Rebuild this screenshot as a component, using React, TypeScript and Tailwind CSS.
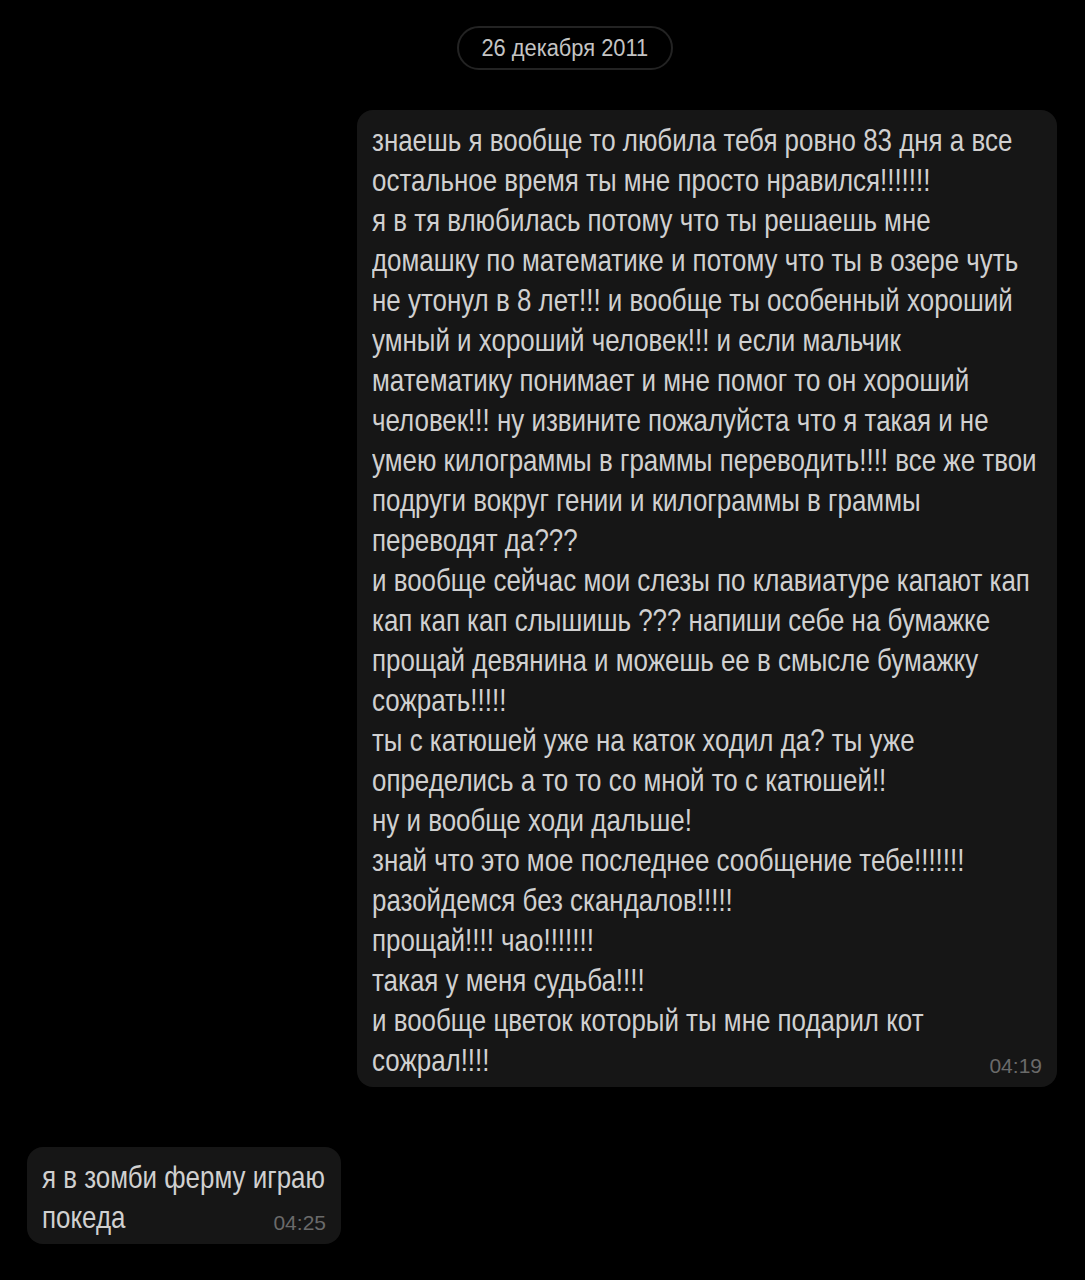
import React from 'react';

const longMessage = [
  'знаешь я вообще то любила тебя ровно 83 дня а все',
  'остальное время ты мне просто нравился!!!!!!!',
  'я в тя влюбилась потому что ты решаешь мне',
  'домашку по математике и потому что ты в озере чуть',
  'не утонул в 8 лет!!! и вообще ты особенный хороший',
  'умный и хороший человек!!! и если мальчик',
  'математику понимает и мне помог то он хороший',
  'человек!!! ну извините пожалуйста что я такая и не',
  'умею килограммы в граммы переводить!!!! все же твои',
  'подруги вокруг гении и килограммы в граммы',
  'переводят да???',
  'и вообще сейчас мои слезы по клавиатуре капают кап',
  'кап кап кап слышишь ??? напиши себе на бумажке',
  'прощай девянина и можешь ее в смысле бумажку',
  'сожрать!!!!!',
  'ты с катюшей уже на каток ходил да? ты уже',
  'определись а то то со мной то с катюшей!!',
  'ну и вообще ходи дальше!',
  'знай что это мое последнее сообщение тебе!!!!!!!',
  'разойдемся без скандалов!!!!!',
  'прощай!!!! чао!!!!!!!',
  'такая у меня судьба!!!!',
  'и вообще цветок который ты мне подарил кот',
  'сожрал!!!!',
];

const shortMessage = ['я в зомби ферму играю', 'покеда'];

// the screenshot's font is a narrow face, so the Arial-width text gets squeezed horizontally
function Bubble({ lines, time, className }: { lines: string[]; time: string; className: string }) {
  return (
    <div className={`relative rounded-[16px] bg-[#161616] pt-[10px] pb-[7px] pl-[15px] pr-[15px] ${className}`}>
      {lines.map((line, i) => (
        <div key={i} className="origin-left scale-x-[0.81] whitespace-nowrap leading-[40px]">
          {line}
        </div>
      ))}
      <span className="absolute right-[15px] bottom-[11px] text-[21px] leading-none text-[#6a6a6a]">{time}</span>
    </div>
  );
}

export default function App() {
  return (
    <div
      className="min-h-[1280px] w-[1085px] bg-black text-[#d0d0d0] text-[32px]"
      style={{ fontFamily: '"Liberation Sans", Arial, sans-serif' }}
    >
      <div className="pt-[26px] pl-[457px]">
        <div className="flex h-[44px] w-[216px] items-center justify-center rounded-full border-2 border-[#232323] text-[23px] text-[#c4c4c4]">
          <span className="scale-x-[0.95]">26 декабря 2011</span>
        </div>
      </div>

      <div className="mt-[40px] flex justify-end pr-[28px]">
        <Bubble lines={longMessage} time="04:19" className="w-[700px]" />
      </div>

      <div className="mt-[60px] pl-[27px]">
        <Bubble lines={shortMessage} time="04:25" className="w-[314px]" />
      </div>
    </div>
  );
}
